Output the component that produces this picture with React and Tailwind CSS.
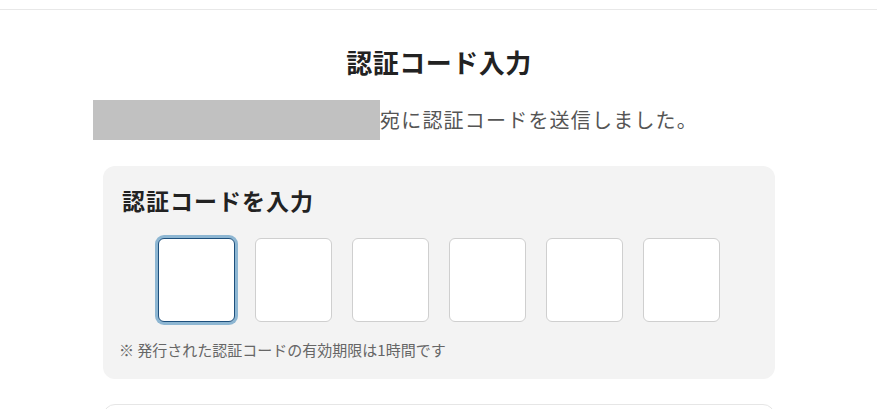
export default function App() {
  const digits = [0, 1, 2, 3, 4, 5];
  return (
    <div className="min-h-screen bg-white text-[#333]" style={{ fontFamily: '"Noto Sans CJK JP", "Noto Sans", sans-serif' }}>
      <header className="h-[10px] border-b border-[#e8e8e8]" />

      <main className="w-[672px] ml-[103px] pt-[34px]">
        <h1 className="text-center text-[26px] font-bold leading-[36px] text-[#222] tracking-[0.5px]">認証コード入力</h1>

        <div className="mt-[20px] flex items-center ml-[-10px]">
          <div className="w-[287px] h-[40px] bg-[#c1c1c1]" />
          <p className="text-[20px] leading-[40px] text-[#555] tracking-[1.2px]">宛に認証コードを送信しました。</p>
        </div>

        <section className="mt-[26px] rounded-xl bg-[#f3f3f3] px-[19px] pt-[18px] pb-[18px]">
          <h2 className="text-[23px] font-bold leading-[32px] text-[#222] tracking-[1px]">認証コードを入力</h2>

          <div className="mt-[22px] flex justify-center gap-[20px]">
            {digits.map(i => (
              <input
                key={i}
                maxLength={1}
                className={
                  i === 0
                    ? "w-[77px] h-[84px] rounded-md bg-white border border-[#1d4f7c] ring-[3px] ring-[#8db6d2] outline-none"
                    : "w-[77px] h-[84px] rounded-md bg-white border border-[#cfcfcf] outline-none"
                }
              />
            ))}
          </div>

          <p className="mt-[17px] ml-[-3px] text-[15px] leading-[22px] text-[#666]">※ 発行された認証コードの有効期限は1時間です</p>
        </section>

        <div className="mt-[25px] h-[40px] rounded-xl border border-[#e6e6e6] bg-white" />
      </main>
    </div>
  );
}
